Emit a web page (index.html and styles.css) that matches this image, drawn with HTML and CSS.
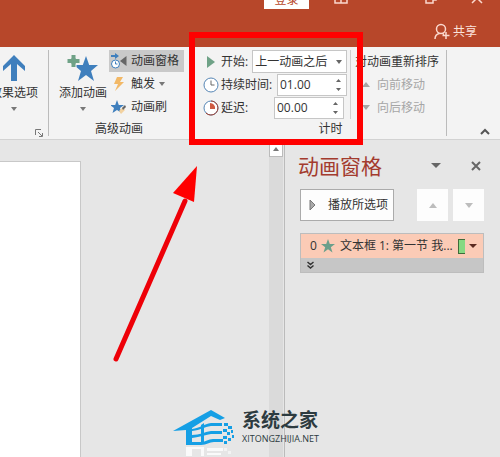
FILE: index.html
```html
<!DOCTYPE html>
<html lang="zh-CN">

<head>
  <meta charset="utf-8">
  <title>动画窗格</title>
  <link rel="stylesheet" href="styles.css">
</head>

<body>
  <header class="titlebar">
    <div class="window-row">
      <button class="login-btn">登录</button>
      <button class="window-btn" aria-label="功能区显示选项"><svg width="14" height="12" viewBox="0 0 14 12"><path d="M1 0v11h12V0M1 7h12M7 7v4" /></svg></button>
      <button class="window-btn restore-btn" aria-label="还原"><svg width="12" height="12" viewBox="0 0 12 12"><path d="M1 3h7v8H1zM3 1h8v7H8" /></svg></button>
      <button class="window-btn close-btn" aria-label="关闭"><svg width="12" height="12" viewBox="0 0 12 12"><path d="M1 1l10 10M11 1L1 11" /></svg></button>
    </div>
    <button class="share-btn">
      <svg width="16" height="17" viewBox="0 0 16 17"><circle cx="7" cy="6" r="4.5" /><path d="M1 16c0-3 2-5 4.500-5.500M8.500 10.500l1.500 1M12 9v7M8.500 12.500h7" /></svg>
      共享
    </button>
  </header>

  <section class="ribbon">
    <div class="group effect-group">
      <button class="big-btn">
        <svg width="24" height="28" viewBox="0 0 24 28"><path fill="#3f7fbd" d="M12 1l11 11v5l-8-7v17H9V10l-8 7v-5z" /></svg>
        <span>效果选项</span>
        <i class="caret"></i>
      </button>
      <button class="launcher" aria-label="更多选项"><svg width="8" height="8" viewBox="0 0 8 8"><path d="M.5 6V.5H6M3 3l4 4M7.500 4v3.500H4" fill="none" stroke="#777" /></svg></button>
    </div>

    <div class="group advanced-group">
      <div class="group-content">
        <button class="big-btn">
          <svg width="32" height="28" viewBox="0 0 32 28">
            <path fill="#3f7fbd" d="M19 2l3.200 9H31l-7 6 3 10-8-6-8 6 3-10-7-6h8.800z" />
            <path fill="#6fa287" stroke="#f3f3f3" d="M4 .5h5v4h4v5H9v4H4v-4H0v-5h4z" />
          </svg>
          <span>添加动画</span>
          <i class="caret"></i>
        </button>
        <div class="small-btns">
          <button class="small-btn active">
            <svg width="16" height="16" viewBox="0 0 16 16">
              <path fill="#3f7fbd" d="M0 2h4V0l4 3-4 3V4H0z" />
              <circle cx="4.500" cy="11" r="4" fill="#fff" stroke="#3f7fbd" />
              <path d="M4.500 8.500V11h2" fill="none" stroke="#3f7fbd" />
              <path fill="#666" d="M15.500 3v10L9 8z" />
            </svg>
            动画窗格
          </button>
          <button class="small-btn">
            <svg width="16" height="16" viewBox="0 0 16 16"><path fill="#f2b866" d="M6 1h6L9 6h4L4 15l3-7H3z" /></svg>
            触发
            <i class="caret small-caret"></i>
          </button>
          <button class="small-btn">
            <svg width="16" height="16" viewBox="0 0 16 16">
              <path fill="#3f7fbd" d="M6 1l1.800 5H13L9 9l1.500 5L6 11l-4.500 3L3 9-1 6h5.200z" />
              <path fill="#f3d2a0" d="M8 12l4-4 2 3-4 4z" />
              <path fill="#666" d="M11 9l3-3 1 2-3 3z" />
            </svg>
            动画刷
          </button>
        </div>
      </div>
      <div class="group-label">高级动画</div>
    </div>

    <div class="group timing-group">
      <div class="group-content">
        <div class="timing-fields">
          <div class="field">
            <svg width="16" height="16" viewBox="0 0 16 16"><path fill="#6fa287" d="M4 2l8 6-8 6z" /></svg>
            <label for="start">开始:</label>
            <select id="start" class="start-select">
              <option>上一动画之后</option>
            </select>
          </div>
          <div class="field">
            <svg width="16" height="16" viewBox="0 0 16 16"><circle cx="8" cy="8" r="7" fill="#fff" stroke="#5686b5" /><path d="M8 3.500V8h3.500" fill="none" stroke="#666" /></svg>
            <label for="duration">持续时间:</label>
            <span class="spinner">
              <input id="duration" type="text" value="01.00">
              <svg width="7" height="16" viewBox="0 0 7 16"><path d="M1 5l2.500-3L6 5zM1 11l2.500 3L6 11z" /></svg>
            </span>
          </div>
          <div class="field delay-field">
            <svg width="16" height="16" viewBox="0 0 16 16"><circle cx="8" cy="8" r="7" fill="#fff" stroke="#5686b5" /><path d="M8 1a7 7 0 1 1-5 12" fill="none" stroke="#a8402c" /><path fill="#cf5b43" d="M7 3a5 5 0 0 1 5 6H7z" /></svg>
            <label for="delay">延迟:</label>
            <span class="spinner">
              <input id="delay" type="text" value="00.00">
              <svg width="7" height="16" viewBox="0 0 7 16"><path d="M1 5l2.500-3L6 5zM1 11l2.500 3L6 11z" /></svg>
            </span>
          </div>
        </div>
        <div class="reorder">
          <div class="reorder-title">对动画重新排序</div>
          <button class="move-btn" disabled><i class="caret up"></i>向前移动</button>
          <button class="move-btn" disabled><i class="caret"></i>向后移动</button>
        </div>
      </div>
      <div class="group-label">计时</div>
    </div>

    <button class="collapse-btn" aria-label="折叠功能区"><svg width="10" height="7" viewBox="0 0 10 7"><path d="M1 6l4-4 4 4" fill="none" stroke="#555" stroke-width="2" /></svg></button>
  </section>

  <main class="workspace">
    <div class="canvas">
      <div class="slide"></div>
    </div>
    <div class="scrollbar">
      <button class="scroll-up" aria-label="向上滚动"><i class="caret up"></i></button>
    </div>
    <aside class="pane">
      <div class="pane-header">
        <h2>动画窗格</h2>
        <button class="pane-icon" aria-label="窗格选项"><svg width="10" height="6" viewBox="0 0 10 6"><path fill="#666" d="M0 0h10L5 5z" /></svg></button>
        <button class="pane-icon" aria-label="关闭窗格"><svg width="12" height="12" viewBox="0 0 12 12"><path d="M2 2l8 8M10 2l-8 8" stroke="#666" stroke-width="2" /></svg></button>
      </div>
      <div class="pane-toolbar">
        <button class="play-btn"><svg width="7" height="12" viewBox="0 0 7 12"><path d="M1 1l5 5-5 5z" fill="#aaa" stroke="#777" /></svg>播放所选项</button>
        <button class="order-btn" aria-label="上移" disabled><i class="caret up"></i></button>
        <button class="order-btn" aria-label="下移" disabled><i class="caret"></i></button>
      </div>
      <div class="animation-list">
        <div class="animation-item">
          <span>0</span>
          <svg width="14" height="14" viewBox="0 0 14 14"><path fill="#6a9f8b" d="M7 0l1.800 5H14L9.800 8.200 11.500 13.500 7 10.300l-4.500 3.200L4.200 8.200 0 5h5.200z" /></svg>
          <span class="item-name">文本框 1: 第一节 我...</span>
          <i class="time-block"></i>
          <button class="item-menu" aria-label="效果菜单"><i class="caret"></i></button>
        </div>
        <button class="expand-btn" aria-label="展开"><svg width="7" height="8" viewBox="0 0 7 8"><path d="M.5 1l3 2.500 3-2.500M.5 4.500l3 2.500 3-2.500" fill="none" stroke="#333" stroke-width="1.500" /></svg></button>
      </div>
    </aside>
  </main>

  <!-- annotations over the window -->
  <div class="highlight-box"></div>
  <svg class="highlight-arrow" width="86" height="200" viewBox="0 0 86 200">
    <path d="M3 196L72 38" stroke="#ee0008" stroke-width="5" stroke-linecap="round" />
    <path fill="#f00" d="M84 3L60 30l21 9z" />
  </svg>

  <div class="watermark">
    <svg width="61" height="47" viewBox="0 0 61 47">
      <g fill="#159fe5">
        <path d="M0 21L38 0l14 8-5 2-9-4-19 12v17h-6V20z" />
        <path d="M19 19c8-1 12-5 19-6h11v3H38c-7 1-10 4-19 5z" />
        <path d="M19 25c8 0 12-3 19-4h11v3H38c-7 1-10 3-19 4z" />
        <path d="M13 32h15c5 0 7-3 12-3h10v3H41c-5 0-7 3-13 3H13z" />
        <path d="M28 15l3-2v21h-3z" />
        <path d="M51 13h4v3h-4zM55 16h4v3h-4zM50 19h4v3h-4zM54 22h3v3h-3zM58 20h2v3h-2zM50 26h4v3h-4zM55 28h3v3h-3zM59 25h2v3h-2zM51 31h3v3h-3z" />
      </g>
      <g fill="#fff">
        <path opacity=".8" d="M13 37h6v9h-6zM28 37h3v9h-3zM19 37h9v2h-9zM34 38h16v3H34zM34 43h14v2H34z" />
        <path opacity=".5" d="M51 38h3v3h-3zM55 41h3v3h-3z" />
      </g>
    </svg>
    <div class="watermark-text">
      <strong>系统之家</strong>
      <span>XITONGZHIJIA.NET</span>
    </div>
  </div>
</body>

</html>
```
FILE: styles.css
```css
* {
  box-sizing: border-box;
}

body {
  display: flex;
  flex-direction: column;
  height: 100vh;
  margin: 0;
  overflow: hidden;
  position: relative;
  background-color: #E6E6E6;
  color: #333;
  font: 12px/16px "Open Sans", "Noto Sans CJK SC", sans-serif;
}

button,
input,
select {
  margin: 0;
  padding: 0;
  border: none;
  border-radius: 0;
  background: none;
  color: inherit;
  font: inherit;
}

svg {
  display: block;
  flex-shrink: 0;
}

.caret {
  border: 3px solid transparent;
  border-top: 4px solid #777;
  border-bottom: none;
}

.caret.up {
  border-top: none;
  border-bottom: 4px solid #777;
}

/* title bar */
.titlebar {
  flex: none;
  height: 47px;
  overflow: hidden;
  background-color: #B7472A;
  color: #FBE3DC;
}

.titlebar svg {
  fill: none;
  stroke: #FBD9CE;
  stroke-width: 1.5;
}

.window-row {
  display: flex;
  justify-content: flex-end;
  align-items: flex-end;
  height: 9px;
  padding-right: 17px;
}

.login-btn {
  width: 45px;
  height: 18px;
  margin-right: 25px;
  background-color: #FFF;
  color: #B7472A;
}

.window-btn {
  padding-bottom: 5px;
}

.restore-btn {
  margin-left: 77px;
}

.close-btn {
  margin-left: 34px;
}

.share-btn {
  display: flex;
  align-items: center;
  gap: 3px;
  margin: 14px 23px 0 auto;
}

/* ribbon */
.ribbon {
  display: flex;
  flex: none;
  height: 93px;
  padding: 3px 0;
  border-bottom: 1px solid #D2D2D2;
  background-color: #F3F3F3;
}

.group {
  display: flex;
  flex-direction: column;
  flex: none;
}

.group-content {
  display: flex;
  height: 69px;
}

.group-label {
  padding-top: 2px;
  text-align: center;
}

.big-btn {
  display: flex;
  flex-direction: column;
  align-items: center;
  flex: none;
  gap: 3px;
  height: 69px;
  padding-top: 4px;
  white-space: nowrap;
}

.big-btn .caret {
  margin-top: 3px;
}

.effect-group {
  align-items: flex-end;
  width: 49px;
  padding-right: 10px;
  border-right: 1px solid #BBB;
}

.launcher {
  margin: 10px -5px 0 0;
}

.advanced-group {
  width: 142px;
  padding-left: 10px;
}

.advanced-group .group-label {
  padding-right: 12px;
}

.small-btns {
  display: flex;
  flex-direction: column;
  gap: 1px;
  width: 75px;
  margin-left: 2px;
}

.small-btn {
  display: flex;
  align-items: center;
  gap: 4px;
  height: 22px;
  padding-left: 2px;
}

.small-btn.active {
  background-color: #C9C9C9;
}

.timing-group {
  width: 256px;
  padding-left: 12px;
  border-right: 1px solid #BBB;
}

.timing-group .group-label {
  padding-left: 12px;
}

.timing-fields {
  display: flex;
  flex-direction: column;
  width: 144px;
}

.field {
  display: flex;
  align-items: center;
  height: 23px;
}

.field label {
  margin: 0 4px 0 2px;
  white-space: nowrap;
}

.start-select {
  flex: 1;
  min-width: 0;
  height: 23px;
  padding-left: 2px;
  border: 1px solid #C6C6C6;
  appearance: none;
  background: #FFF url("data:image/svg+xml,%3Csvg xmlns='http://www.w3.org/2000/svg' width='6' height='4'%3E%3Cpath fill='%23666' d='M0 0h6L3 4z'/%3E%3C/svg%3E") no-repeat right 4px center;
}

.spinner {
  display: flex;
  align-items: center;
  width: 70px;
  height: 22px;
  margin-left: auto;
  padding: 0 4px 0 2px;
  border: 1px solid #C6C6C6;
  background-color: #FFF;
}

.spinner input {
  flex: 1;
  min-width: 0;
}

.spinner path {
  fill: #666;
}

.delay-field {
  padding-right: 3px;
}

.reorder {
  display: flex;
  flex-direction: column;
  margin-left: 3px;
  padding-left: 4px;
  border-left: 1px solid #CFCFCF;
  white-space: nowrap;
}

.reorder-title,
.move-btn {
  display: flex;
  align-items: center;
  height: 23px;
}

.move-btn {
  gap: 7px;
  padding-left: 7px;
  color: #A6A6A6;
}

.move-btn .caret {
  border-width: 5px 4px 0;
  border-top-color: #A6A6A6;
}

.move-btn .caret.up {
  border-width: 0 4px 5px;
  border-bottom-color: #A6A6A6;
}

.collapse-btn {
  align-self: flex-end;
  margin: 0 10px 1px auto;
}

/* workspace */
.workspace {
  display: flex;
  flex: 1;
  min-height: 0;
}

.canvas {
  display: flex;
  flex: 1;
  padding-top: 21px;
}

.slide {
  width: 30%;
  border: 1px solid #C8C8C8;
  border-width: 1px 1px 0 0;
  background-color: #FFF;
}

.scrollbar {
  width: 14px;
  background-color: #DADADA;
}

.scroll-up {
  display: flex;
  align-items: center;
  justify-content: center;
  width: 14px;
  height: 17px;
  border: 1px solid #BBB;
  background-color: #FFF;
}

.pane {
  width: 216px;
  margin-left: 1px;
  padding: 12px 16px 0 15px;
  border-left: 1px solid #BBB;
}

.pane-header {
  display: flex;
  align-items: center;
  height: 28px;
  padding-right: 2px;
}

.pane-header h2 {
  flex: 1;
  margin: 0 0 0 -2px;
  color: #A33B2E;
  font-size: 21px;
  font-weight: normal;
  line-height: 28px;
}

.pane-icon + .pane-icon {
  margin-left: 29px;
}

.pane-toolbar {
  display: flex;
  gap: 5px;
  height: 32px;
  margin-top: 9px;
}

.play-btn {
  display: flex;
  align-items: center;
  gap: 12px;
  width: 94px;
  margin-right: auto;
  padding-left: 8px;
  border: 1px solid #ABABAB;
  background-color: #FDFDFD;
  white-space: nowrap;
}

.order-btn {
  display: flex;
  align-items: center;
  justify-content: center;
  width: 31px;
  background-color: #FDFDFD;
}

.order-btn .caret {
  border-width: 0 4px;
  border-top: 5px solid #BDBDBD;
}

.order-btn .caret.up {
  border-top: none;
  border-bottom: 5px solid #BDBDBD;
}

.animation-list {
  margin-top: 12px;
  border: 1px solid #BDBDBD;
  background-color: #C6C6C6;
}

.animation-item {
  display: flex;
  align-items: center;
  height: 24px;
  padding: 0 6px 0 9px;
  background-color: #FBCBB6;
  white-space: nowrap;
}

.animation-item svg {
  margin: 0 5px 0 4px;
}

.item-name {
  flex: 1;
}

.time-block {
  width: 7px;
  height: 15px;
  margin-right: 4px;
  border: 1px solid #3F6B3A;
  border-right: none;
  background-color: #86D982;
}

.item-menu .caret {
  display: block;
  border-width: 4px 4px 0;
  border-top-color: #5A2A20;
}

.expand-btn {
  display: flex;
  align-items: center;
  width: 100%;
  height: 14px;
  padding-left: 6px;
}

/* annotations */
.highlight-box {
  position: absolute;
  top: 32px;
  left: 189px;
  width: 174px;
  height: 113px;
  border: 6px solid #F00;
  pointer-events: none;
}

.highlight-arrow {
  position: absolute;
  top: 163px;
  left: 113px;
  pointer-events: none;
}

.watermark {
  display: flex;
  gap: 8px;
  position: absolute;
  top: 410px;
  left: 173px;
}

.watermark-text {
  display: flex;
  flex-direction: column;
  color: #2D3B40;
}

.watermark-text strong {
  font-size: 19px;
  line-height: 21px;
}

.watermark-text span {
  padding-top: 2px;
  font-size: 9px;
  line-height: 12px;
}
```
